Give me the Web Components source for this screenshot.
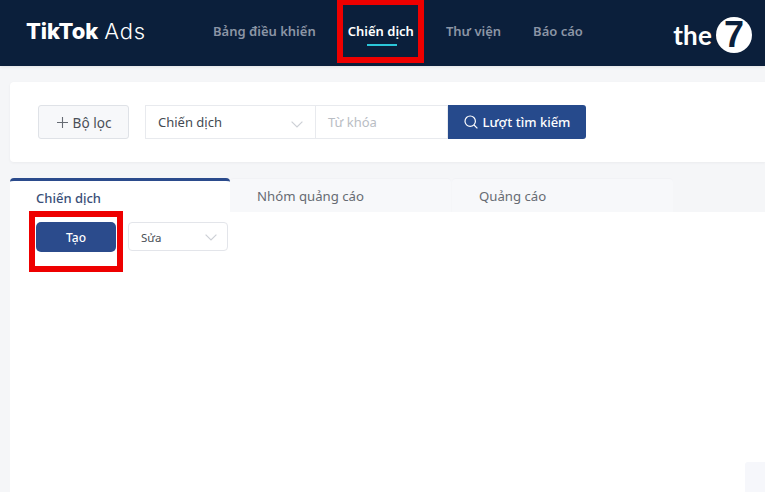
<!DOCTYPE html>
<html lang="vi">
<head>
<meta charset="utf-8">
<title>TikTok Ads</title>
<style>
  html, body { margin: 0; height: 100%; overflow: hidden; background: #f5f6f8; font-family: "Noto Sans", "Open Sans", sans-serif; }
</style>
</head>
<body>
<ads-page></ads-page>
<script>
const chevron = (top) => `<svg width="12" height="7" viewBox="0 0 12 7" fill="none" stroke="#cdd0d6" stroke-width="1.2" style="margin-top:${top}px"><path d="M.6.6 6 6 11.4.6"/></svg>`;

class NavItem extends HTMLElement {
    constructor() {
        super();
        this.attachShadow({ mode: 'open' });
        this.shadowRoot.innerHTML = `
            <style>
                :host { display: block; position: relative; font-size: 13px; font-weight: 600; line-height: 18px; color: #8b95a5; white-space: nowrap; }
                :host([active]) { color: #fff; }
                :host([active])::after {
                    content: '';
                    position: absolute;
                    left: 19px;
                    top: 22px;
                    width: 30px;
                    height: 2px;
                    background: #2bc6d9;
                }
            </style>
            <slot></slot>
        `;
    }
}

class AppHeader extends HTMLElement {
    constructor() {
        super();
        this.attachShadow({ mode: 'open' });
        this.shadowRoot.innerHTML = `
            <style>
                :host { display: flex; align-items: center; height: 66px; background: #0b1f3b; box-sizing: border-box; padding: 0 13px 4px 26px; box-shadow: 0 1px 3px rgba(0,0,0,.08); }
                .logo { width: 187px; color: #fff; font-family: "Inter", sans-serif; font-size: 22px; line-height: 24px; white-space: nowrap; letter-spacing: -.1px; }
                .logo b { font-weight: 800; }
                .logo span { font-weight: 300; letter-spacing: .8px; }
                nav { display: flex; gap: 32px; }
                .brand { margin-left: auto; display: flex; align-items: center; gap: 4px; color: #fff; padding-top: 8px; }
                .the { font-family: "Lato", sans-serif; font-weight: 700; font-size: 26px; line-height: 30px; letter-spacing: .2px; }
                .seven { width: 36px; height: 36px; border-radius: 50%; background: #fff; color: #0b1f3b; font: 700 36px/36px "Liberation Sans", sans-serif; text-align: center; }
            </style>
            <div class="logo"><b>TikTok</b> <span>Ads</span></div>
            <nav><slot></slot></nav>
            <div class="brand"><span class="the">the</span><span class="seven">7</span></div>
        `;
    }
}

class FilterBar extends HTMLElement {
    constructor() {
        super();
        this.attachShadow({ mode: 'open' });
        this.shadowRoot.innerHTML = `
            <style>
                :host { display: flex; align-items: center; height: 80px; margin: 16px 0 16px 10px; box-sizing: border-box; padding-left: 28px; background: #fff; border-radius: 4px 0 0 4px; box-shadow: 0 1px 3px rgba(30,40,60,.05); font-size: 13px; }
                .add { display: flex; align-items: center; justify-content: center; gap: 5px; box-sizing: border-box; width: 91px; height: 34px; margin-right: 16px; padding-left: 1px; background: #f7f8fa; border: 1px solid #dfe2e7; border-radius: 3px; color: #4a4f57; font-size: 13.6px; }
                .select, .keyword { display: flex; align-items: center; box-sizing: border-box; height: 34px; border: 1px solid #e8eaee; background: #fff; }
                .select { width: 171px; padding: 0 12px; justify-content: space-between; color: #444a52; }
                .keyword { width: 132px; border-left: 0; padding-left: 12px; color: #b9bdc4; }
                .search { display: flex; align-items: center; justify-content: center; gap: 5px; width: 138px; height: 34px; background: #264a8c; border-radius: 0 3px 3px 0; color: #fff; font-weight: 500; }
            </style>
            <div class="add">
                <svg width="11" height="11" viewBox="0 0 11 11" stroke="#666b73" stroke-width="1.1"><path d="M5.5 0v11M0 5.5h11"/></svg>
                <span>Bộ lọc</span>
            </div>
            <div class="select"><span>Chiến dịch</span>${chevron(4)}</div>
            <div class="keyword">Từ khóa</div>
            <div class="search">
                <svg width="14" height="14" viewBox="0 0 14 14" fill="none" stroke="#fff" stroke-width="1.2"><circle cx="6.2" cy="6.2" r="5.2"/><path d="m10 10 3.4 3.4"/></svg>
                <span>Lượt tìm kiếm</span>
            </div>
        `;
    }
}

class TabItem extends HTMLElement {
    constructor() {
        super();
        this.attachShadow({ mode: 'open' });
        this.shadowRoot.innerHTML = `
            <style>
                :host { display: block; box-sizing: border-box; width: 221px; height: 34px; padding: 8px 0 0 27px; font-size: 13.2px; line-height: 18px; color: #666b72; background: #f7f8fa; border-top: 1px solid #f1f2f5; border-radius: 4px 4px 0 0; }
                :host([active]) { width: 220px; height: 34px; padding: 8px 0 0 26px; color: #3a4f78; font-size: 13px; font-weight: 500; background: #fff; border-top: 3px solid #2b4b8c; }
            </style>
            <slot></slot>
        `;
    }
}

class CampaignPanel extends HTMLElement {
    constructor() {
        super();
        this.attachShadow({ mode: 'open' });
        this.shadowRoot.innerHTML = `
            <style>
                :host { display: block; margin-left: 10px; }
                .tabs { display: flex; }
                .tabs ::slotted(tab-item:last-child) { margin-left: 1px; }
                .body { display: flex; align-items: flex-start; gap: 12px; height: 280px; padding: 10px 0 0 26px; background: #fff; }
                .create { display: flex; align-items: center; justify-content: center; width: 80px; height: 30px; border-radius: 5px; background: #2b4b8c; color: #fff; font-size: 12px; font-weight: 500; }
                .edit { display: flex; align-items: center; justify-content: space-between; box-sizing: border-box; width: 100px; height: 29px; padding: 1px 10px 0 12px; border: 1px solid #e3e5ea; border-radius: 4px; color: #4a4f57; font-size: 11.5px; background: #fff; }
            </style>
            <div class="tabs"><slot></slot></div>
            <div class="body">
                <div class="create">Tạo</div>
                <div class="edit"><span>Sửa</span>${chevron(0)}</div>
            </div>
        `;
    }
}

class RedFrame extends HTMLElement {
    constructor() {
        super();
        this.attachShadow({ mode: 'open' });
        this.shadowRoot.innerHTML = `
            <style>
                :host { display: block; position: absolute; box-sizing: border-box; border: 6px solid #ee0000; pointer-events: none; }
            </style>
        `;
    }
}

class AdsPage extends HTMLElement {
    constructor() {
        super();
        this.attachShadow({ mode: 'open' });
        this.shadowRoot.innerHTML = `
            <style>
                :host { display: block; position: relative; width: 765px; height: 492px; overflow: hidden; }
                .corner { position: absolute; left: 745px; top: 462px; width: 20px; height: 30px; background: #f6f7fb; border-radius: 3px 0 0 0; }
            </style>
            <app-header>
                <nav-item>Bảng điều khiển</nav-item>
                <nav-item active>Chiến dịch</nav-item>
                <nav-item>Thư viện</nav-item>
                <nav-item>Báo cáo</nav-item>
            </app-header>
            <filter-bar></filter-bar>
            <campaign-panel>
                <tab-item active>Chiến dịch</tab-item>
                <tab-item>Nhóm quảng cáo</tab-item>
                <tab-item>Quảng cáo</tab-item>
            </campaign-panel>
            <red-frame style="left:337px;top:-1px;width:87px;height:64px"></red-frame>
            <red-frame style="left:29px;top:211px;width:94px;height:61px"></red-frame>
            <div class="corner"></div>
        `;
    }
}

customElements.define('nav-item', NavItem);
customElements.define('app-header', AppHeader);
customElements.define('filter-bar', FilterBar);
customElements.define('tab-item', TabItem);
customElements.define('campaign-panel', CampaignPanel);
customElements.define('red-frame', RedFrame);
customElements.define('ads-page', AdsPage);
</script>
</body>
</html>
